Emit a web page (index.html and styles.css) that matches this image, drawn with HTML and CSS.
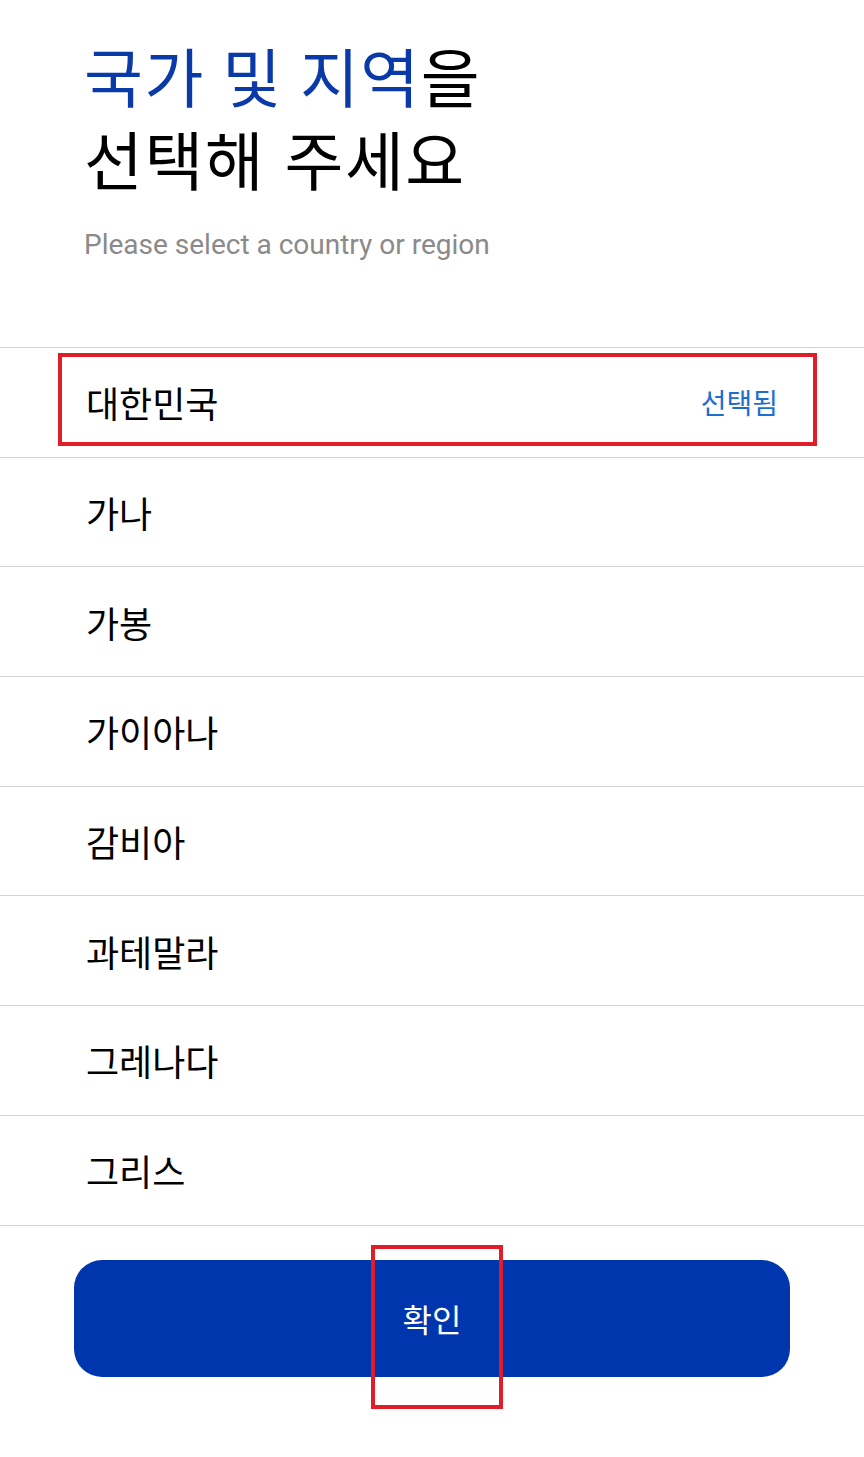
FILE: index.html
```html
<!DOCTYPE html>
<html lang="ko">
  <head>
    <meta charset="UTF-8" />
    <meta name="viewport" content="width=device-width, initial-scale=1.0" />
    <title>국가 및 지역 선택</title>
    <link rel="stylesheet" href="styles.css">
  </head>
  <body>
    <div class="container">
      <header class="title">
        <h1><span class="accent">국가 및 지역</span>을<br>선택해 주세요</h1>
        <p class="subtitle">Please select a country or region</p>
      </header>

      <ul class="list">
        <li class="row selected">
          <span>대한민국</span>
          <span class="tag">선택됨</span>
          <div class="mark mark-row"></div>
        </li>
        <li class="row"><span>가나</span></li>
        <li class="row"><span>가봉</span></li>
        <li class="row"><span>가이아나</span></li>
        <li class="row"><span>감비아</span></li>
        <li class="row"><span>과테말라</span></li>
        <li class="row"><span>그레나다</span></li>
        <li class="row"><span>그리스</span></li>
      </ul>

      <footer class="footer">
        <button class="btn">확인</button>
        <div class="mark mark-btn"></div>
      </footer>
    </div>
  </body>
</html>
```

FILE: styles.css
```css
* {
  margin: 0;
  padding: 0;
  outline: 0;
  box-sizing: border-box;
  font-family: Roboto, 'Noto Sans CJK KR', sans-serif;
}
body {
  width: 100%;
  background: #fff;
  color: #000;
}
.container {
  width: 100%;
  display: flex;
  flex-direction: column;
}
.title {
  padding: 36px 0 0 84px;
  height: 347px;
}
.title h1 {
  font-family: 'Noto Sans CJK KR', sans-serif;
  font-size: 64px;
  font-weight: 400;
  line-height: 77px;
  letter-spacing: 1.5px;
}
.accent {
  color: #0a3aa8;
}
.subtitle {
  margin-top: 32px;
  font-size: 28px;
  color: #8a8a8a;
}
.list {
  list-style: none;
  border-top: 1px solid #d2d2d2;
}
.row {
  position: relative;
  height: 109.7px;
  padding: 0 86px;
  display: flex;
  align-items: center;
  justify-content: space-between;
  border-bottom: 1px solid #d2d2d2;
  font-family: 'Noto Sans CJK KR', sans-serif;
  font-size: 36px;
}
.tag {
  font-size: 28px;
  color: #1a6fcf;
}
.footer {
  position: relative;
  padding: 34px 74px 82px;
}
.btn {
  width: 100%;
  height: 117px;
  border: none;
  border-radius: 28px;
  background: #0036ad;
  color: #fff;
  font-family: 'Noto Sans CJK KR', sans-serif;
  font-size: 32px;
}
.mark {
  position: absolute;
  border: 4px solid #e01e2a;
}
.mark-row {
  left: 58px;
  top: 5px;
  width: 759px;
  height: 93px;
}
.mark-btn {
  left: 371px;
  top: 19px;
  width: 132px;
  height: 164px;
}
```
